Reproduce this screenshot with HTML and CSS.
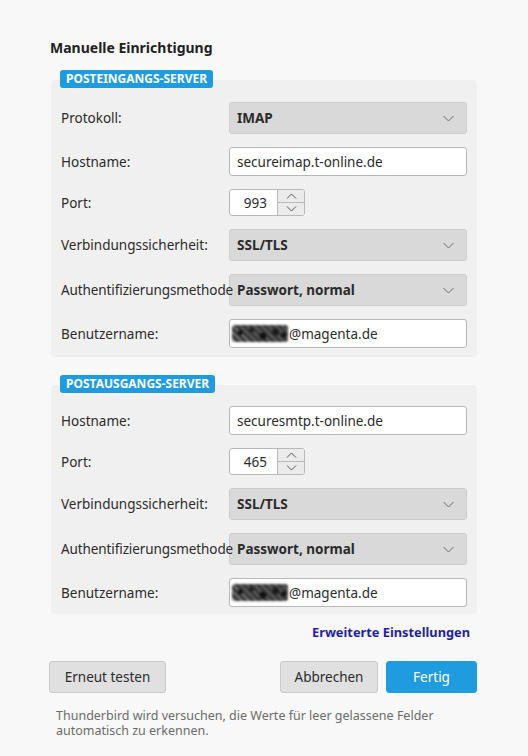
FILE: index.html
```html
<!DOCTYPE html>
<html lang="de">
<head>
<meta charset="utf-8">
<title>Manuelle Einrichtigung</title>
<link rel="stylesheet" href="styles.css">
</head>
<body>
<div class="dialog">
  <h2 class="title">Manuelle Einrichtigung</h2>

  <section class="server">
    <div class="badge">POSTEINGANGS-SERVER</div>
    <div class="box">
      <div class="row">
        <span class="label">Protokoll:</span>
        <div class="select"><span>IMAP</span><svg class="chev" width="11" height="7" viewBox="0 0 11 7"><path d="M0.5 1l5 5 5-5" fill="none" stroke="#6a6a6a" stroke-width="1"/></svg></div>
      </div>
      <div class="row">
        <span class="label">Hostname:</span>
        <div class="input">secureimap.t-online.de</div>
      </div>
      <div class="row">
        <span class="label">Port:</span>
        <div class="number">
          <span class="num">993</span>
          <span class="spin">
            <span class="up"><svg width="11" height="6" viewBox="0 0 11 6"><path d="M1 5.5l4.5-4.5 4.5 4.5" fill="none" stroke="#555" stroke-width="1"/></svg></span>
            <span class="down"><svg width="11" height="6" viewBox="0 0 11 6"><path d="M1 0.5l4.5 4.5 4.5-4.5" fill="none" stroke="#555" stroke-width="1"/></svg></span>
          </span>
        </div>
      </div>
      <div class="row">
        <span class="label">Verbindungssicherheit:</span>
        <div class="select"><span>SSL/TLS</span><svg class="chev" width="11" height="7" viewBox="0 0 11 7"><path d="M0.5 1l5 5 5-5" fill="none" stroke="#6a6a6a" stroke-width="1"/></svg></div>
      </div>
      <div class="row">
        <span class="label over">Authentifizierungsmethode</span>
        <div class="select"><span>Passwort, normal</span><svg class="chev" width="11" height="7" viewBox="0 0 11 7"><path d="M0.5 1l5 5 5-5" fill="none" stroke="#6a6a6a" stroke-width="1"/></svg></div>
      </div>
      <div class="row">
        <span class="label">Benutzername:</span>
        <div class="input user"><span class="blur"></span>@magenta.de</div>
      </div>
    </div>
  </section>

  <section class="server second">
    <div class="badge">POSTAUSGANGS-SERVER</div>
    <div class="box box2">
      <div class="row">
        <span class="label">Hostname:</span>
        <div class="input">securesmtp.t-online.de</div>
      </div>
      <div class="row">
        <span class="label">Port:</span>
        <div class="number">
          <span class="num">465</span>
          <span class="spin">
            <span class="up"><svg width="11" height="6" viewBox="0 0 11 6"><path d="M1 5.5l4.5-4.5 4.5 4.5" fill="none" stroke="#555" stroke-width="1"/></svg></span>
            <span class="down"><svg width="11" height="6" viewBox="0 0 11 6"><path d="M1 0.5l4.5 4.5 4.5-4.5" fill="none" stroke="#555" stroke-width="1"/></svg></span>
          </span>
        </div>
      </div>
      <div class="row">
        <span class="label">Verbindungssicherheit:</span>
        <div class="select"><span>SSL/TLS</span><svg class="chev" width="11" height="7" viewBox="0 0 11 7"><path d="M0.5 1l5 5 5-5" fill="none" stroke="#6a6a6a" stroke-width="1"/></svg></div>
      </div>
      <div class="row">
        <span class="label over">Authentifizierungsmethode</span>
        <div class="select"><span>Passwort, normal</span><svg class="chev" width="11" height="7" viewBox="0 0 11 7"><path d="M0.5 1l5 5 5-5" fill="none" stroke="#6a6a6a" stroke-width="1"/></svg></div>
      </div>
      <div class="row">
        <span class="label">Benutzername:</span>
        <div class="input user"><span class="blur"></span>@magenta.de</div>
      </div>
    </div>
  </section>

  <div class="advanced"><a class="link">Erweiterte Einstellungen</a></div>

  <div class="buttons">
    <button class="btn">Erneut testen</button>
    <div class="right">
      <button class="btn">Abbrechen</button>
      <button class="btn primary">Fertig</button>
    </div>
  </div>

  <p class="note">Thunderbird wird versuchen, die Werte für leer gelassene Felder automatisch zu erkennen.</p>
</div>
</body>
</html>
```

FILE: styles.css
```css
html, body {
  margin: 0;
  padding: 0;
  background: #f8f8f8;
}
body {
  font-family: "Noto Sans", "Open Sans", sans-serif;
  font-size: 13.5px;
  color: #2b2b2b;
}
.dialog {
  padding: 38px 51px 0 49px;
}
.title {
  margin: 0 0 12px 1px;
  font-size: 14px;
  font-weight: 700;
  line-height: 20px;
  color: #222;
}
.server {
  display: flex;
  flex-direction: column;
  margin-left: 2px;
}
.server.second {
  margin-top: 18px;
}
.badge {
  position: relative;
  z-index: 1;
  align-self: flex-start;
  margin-left: 9px;
  background: #1f9be0;
  color: #fff;
  font-size: 12px;
  font-weight: 700;
  line-height: 18px;
  padding: 0 6px;
  border-radius: 3px;
}
.box {
  margin-top: -8px;
  background: #f0f0f0;
  border-radius: 4px;
  padding: 22px 8px 9px 10px;
  display: flex;
  flex-direction: column;
  gap: 13px;
}
.box2 {
  padding-top: 21px;
  padding-bottom: 7px;
}
.row {
  display: grid;
  grid-template-columns: 168px 238px;
  align-items: center;
}
.label {
  white-space: nowrap;
  color: #2b2b2b;
}
.label.over {
  position: relative;
  z-index: 1;
  letter-spacing: -0.1px;
}
.select {
  height: 30px;
  background: #d9d9d9;
  border: 1px solid #cdcdcd;
  border-radius: 3px;
  display: flex;
  align-items: center;
  justify-content: space-between;
  padding: 0 12px 0 7px;
  font-weight: 700;
  color: #2b2b2b;
}
.chev {
  display: block;
}
.input {
  height: 27px;
  background: #fff;
  border: 1px solid #b8b8b8;
  border-radius: 3px;
  display: flex;
  align-items: center;
  padding: 0 7px;
  color: #2b2b2b;
}
.user {
  padding-left: 2px;
}
.blur {
  display: inline-block;
  width: 56px;
  height: 17px;
  margin-right: 1px;
  border-radius: 3px;
  background:
    radial-gradient(circle at 15% 45%, #111 0 2px, transparent 3px),
    radial-gradient(circle at 35% 30%, #222 0 2px, transparent 3px),
    radial-gradient(circle at 55% 65%, #111 0 3px, transparent 4px),
    radial-gradient(circle at 78% 40%, #1a1a1a 0 3px, transparent 4px),
    radial-gradient(circle at 92% 60%, #111 0 2px, transparent 3px),
    repeating-linear-gradient(45deg, #444 0 2px, #8a8a8a 2px 3px, #333 3px 5px),
    #555;
  filter: blur(0.8px);
}
.number {
  width: 74px;
  height: 25px;
  background: #fff;
  border: 1px solid #b8b8b8;
  border-radius: 3px;
  display: flex;
}
.num {
  flex: 1;
  display: flex;
  align-items: center;
  justify-content: flex-end;
  padding-right: 10px;
}
.spin {
  width: 26px;
  display: flex;
  flex-direction: column;
  border-left: 1px solid #b8b8b8;
  background: #ebebeb;
  border-radius: 0 3px 3px 0;
}
.spin .up, .spin .down {
  flex: 1;
  display: flex;
  align-items: center;
  justify-content: center;
}
.spin .up {
  border-bottom: 1px solid #b8b8b8;
}
.advanced {
  display: flex;
  justify-content: flex-end;
  margin-top: 9px;
  padding-right: 7px;
}
.link {
  color: #1f1fa6;
  font-weight: 700;
  font-size: 12.8px;
  line-height: 18px;
}
.buttons {
  display: flex;
  justify-content: space-between;
  margin-top: 20px;
}
.right {
  display: flex;
  gap: 8px;
}
.btn {
  font-family: inherit;
  font-size: 13.5px;
  height: 32px;
  padding: 0 12px;
  background: #e0e0e0;
  border: 1px solid #c9c9c9;
  border-radius: 3px;
  color: #2b2b2b;
}
.btn:first-child {
  min-width: 117px;
}
.right .btn:first-child {
  min-width: 98px;
}
.primary {
  min-width: 91px;
  background: #1f9be0;
  border-color: #1f9be0;
  color: #fff;
}
.note {
  margin: 15px 0 0 7px;
  font-size: 12.5px;
  line-height: 15px;
  color: #6b6b6b;
  max-width: 420px;
}
```
